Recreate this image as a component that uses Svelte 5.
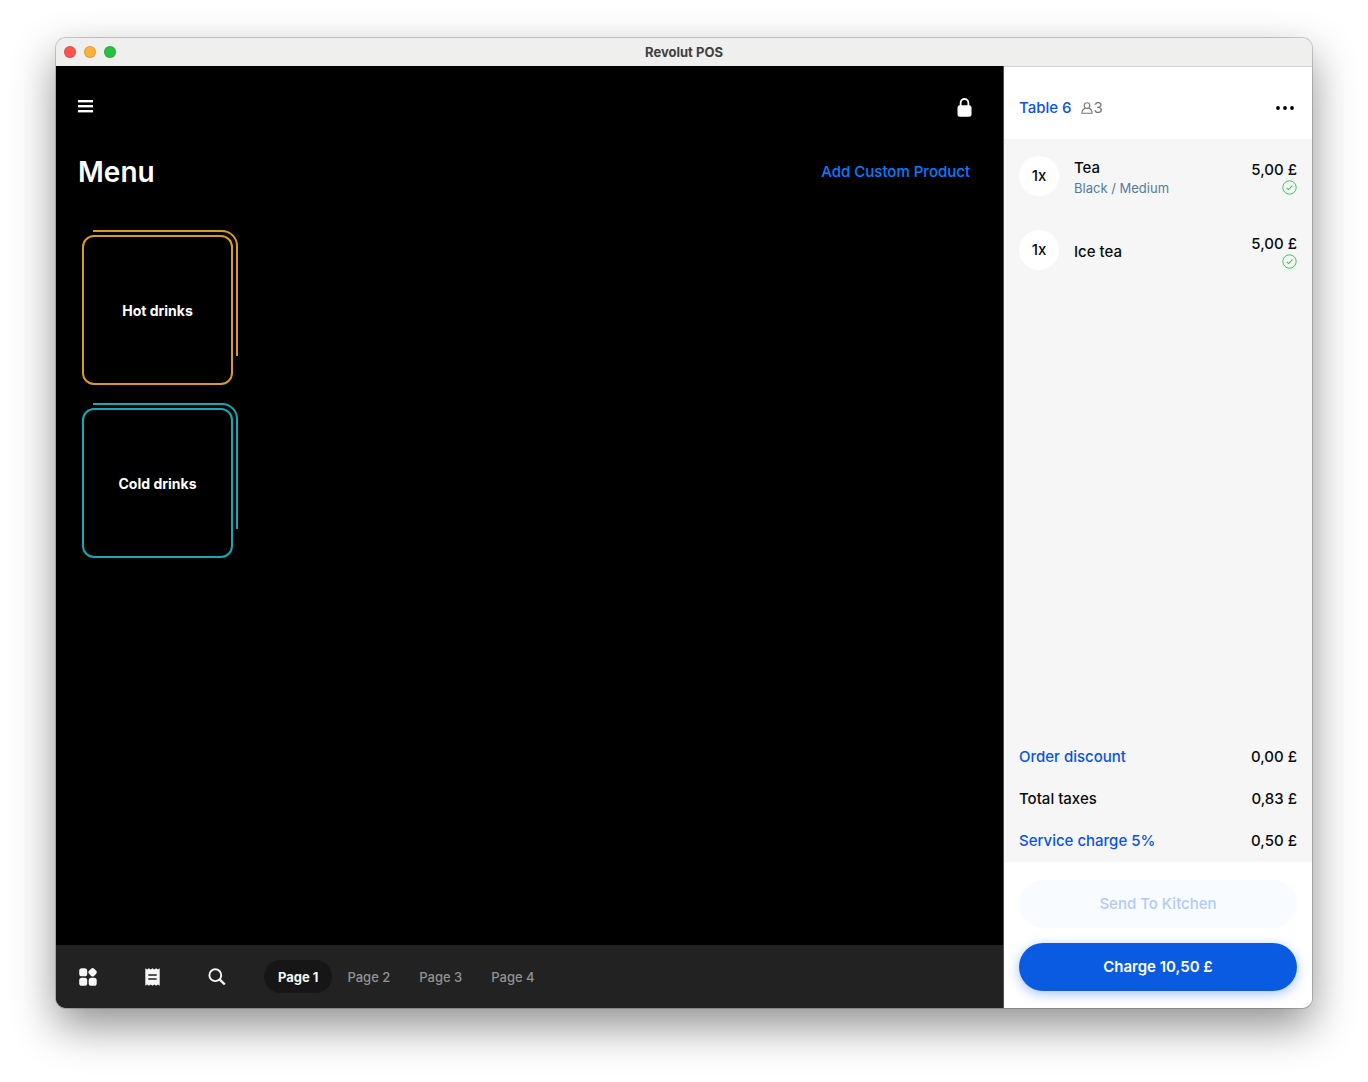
<!--
  App.svelte - point of sale window: product menu on the left, current order on the right
-->
<script lang="ts">
type Category = { name: string; tone: string }
type OrderLine = { qty: number; name: string; options?: string; price: string }

const categories: Category[] = [
  { name: 'Hot drinks', tone: 'amber' },
  { name: 'Cold drinks', tone: 'teal' },
]

const lines: OrderLine[] = [
  { qty: 1, name: 'Tea', options: 'Black / Medium', price: '5,00 £' },
  { qty: 1, name: 'Ice tea', price: '5,00 £' },
]

const pages = ['Page 1', 'Page 2', 'Page 3', 'Page 4']
let activePage = $state('Page 1')
</script>

<div class="desktop">
  <div class="window">
    <header class="titlebar">
      <div class="lights">
        <span class="light red"></span>
        <span class="light yellow"></span>
        <span class="light green"></span>
      </div>
      <div class="window-title">Revolut POS</div>
    </header>

    <div class="body">
      <main class="menu">
        <div class="toolbar">
          <button class="icon-button" aria-label="Open navigation">
            <svg width="15" height="14" viewBox="0 0 15 14" fill="#fff">
              <rect width="15" height="2.4" />
              <rect y="5" width="15" height="2.4" />
              <rect y="10" width="15" height="2.4" />
            </svg>
          </button>
          <button class="icon-button" aria-label="Lock">
            <svg width="15" height="19" viewBox="0 0 15 19">
              <rect x="0.5" y="7.3" width="14" height="11.5" rx="2.5" fill="#fff" />
              <path d="M3.6 9V4.9a3.9 3.9 0 0 1 7.8 0V9" fill="none" stroke="#fff" stroke-width="1.8" />
            </svg>
          </button>
        </div>

        <div class="heading">
          <h1>Menu</h1>
          <button class="add-product">Add Custom Product</button>
        </div>

        <div class="tiles">
          {#each categories as category}
            <button class="tile {category.tone}">{category.name}</button>
          {/each}
        </div>

        <nav class="bottom-bar">
          <div class="tools">
            <button class="icon-button" aria-label="Products">
              <svg width="18" height="18" viewBox="0 0 18 18" fill="#f7f7f7">
                <rect x="0.2" y="0.3" width="8" height="8" rx="2.6" />
                <rect x="10" y="0.7" width="7.2" height="7.2" rx="2.4" transform="rotate(45 13.6 4.3)" />
                <rect x="0.2" y="9.8" width="8" height="8" rx="2.6" />
                <rect x="9.7" y="9.8" width="8" height="8" rx="2.6" />
              </svg>
            </button>
            <button class="icon-button" aria-label="Orders">
              <svg width="15" height="18" viewBox="0 0 15 18">
                <path
                  d="M0.3 0.3l1.8 1.2L3.9 0.3l1.8 1.2L7.5 0.3l1.8 1.2 1.8-1.2 1.8 1.2 1.8-1.2v17.4l-1.8-1.2-1.8 1.2-1.8-1.2-1.8 1.2-1.8-1.2-1.8 1.2-1.8-1.2-1.8 1.2z"
                  fill="#f7f7f7"
                />
                <path d="M3.3 7h8.4M3.3 11h8.4" stroke="#222" stroke-width="1.4" />
              </svg>
            </button>
            <button class="icon-button" aria-label="Search">
              <svg width="18" height="18" viewBox="0 0 18 18" fill="none" stroke="#f7f7f7">
                <circle cx="7.3" cy="7.2" r="5.9" stroke-width="1.9" />
                <path d="M11.6 11.4l5.2 5.1" stroke-width="2.4" />
              </svg>
            </button>
          </div>
          <div class="pages">
            {#each pages as page}
              <button class="page" class:active={page === activePage} onclick={() => (activePage = page)}>
                {page}
              </button>
            {/each}
          </div>
        </nav>
      </main>

      <aside class="order">
        <div class="order-header">
          <button class="table-name">Table 6</button>
          <span class="guests">
            <svg width="12" height="12" viewBox="0 0 12 12" fill="none" stroke="#75787b" stroke-width="1.1">
              <circle cx="6" cy="3.6" r="2.8" />
              <path d="M4.1 6.2C2.2 6.9 0.9 8.6 0.9 11.2h10.2C11.1 8.6 9.8 6.9 7.9 6.2" />
            </svg>
            3
          </span>
          <button class="icon-button more" aria-label="More options">
            <svg width="18" height="4" viewBox="0 0 18 4" fill="#000">
              <circle cx="2" cy="2" r="1.9" />
              <circle cx="9" cy="2" r="1.9" />
              <circle cx="16" cy="2" r="1.9" />
            </svg>
          </button>
        </div>

        <div class="order-body">
          <ul class="lines">
            {#each lines as line}
              <li class="line">
                <span class="qty">{line.qty}x</span>
                <div class="product">
                  <div>{line.name}</div>
                  {#if line.options}
                    <div class="options">{line.options}</div>
                  {/if}
                </div>
                <div class="price">
                  {line.price}
                  <svg width="15" height="15" viewBox="0 0 15 15" fill="none" stroke="#3dc456">
                    <circle cx="7.5" cy="7.5" r="6.7" stroke-width="1" />
                    <path d="M4.6 7.8l1.9 1.8 3.9-4" stroke-width="1.1" />
                  </svg>
                </div>
              </li>
            {/each}
          </ul>

          <div class="totals">
            <div class="total">
              <button class="total-link">Order discount</button>
              <span>0,00 £</span>
            </div>
            <div class="total">
              <span>Total taxes</span>
              <span>0,83 £</span>
            </div>
            <div class="total">
              <button class="total-link">Service charge 5%</button>
              <span>0,50 £</span>
            </div>
          </div>
        </div>

        <div class="actions">
          <button class="action send" disabled>Send To Kitchen</button>
          <button class="action charge">Charge 10,50 £</button>
        </div>
      </aside>
    </div>
  </div>
</div>

<style>
  :global(body) {
    background: #fff;
  }

  .desktop {
    box-sizing: border-box;
    display: flex;
    min-height: 100vh;
    padding: 38px 56px 74px;
    overflow: hidden;
    font-family: Inter, 'Liberation Sans', sans-serif;
    font-size: 15px;
    font-weight: 500;
    line-height: 20px;
    color: #0b0b0c;
  }

  .window {
    flex: 1;
    display: flex;
    flex-direction: column;
    border-radius: 10px;
    overflow: hidden;
    box-shadow:
      0 0 0 1px rgba(0, 0, 0, 0.18),
      0 18px 44px rgba(0, 0, 0, 0.44);
  }

  button {
    margin: 0;
    padding: 0;
    border: 0;
    background: none;
    color: inherit;
    font: inherit;
    cursor: pointer;
  }

  svg {
    display: block;
  }

  /* title bar */
  .titlebar {
    display: grid;
    grid-template-columns: 1fr auto 1fr;
    align-items: center;
    height: 28px;
    padding: 0 8px;
    background: #efefed;
  }

  .lights {
    display: flex;
    gap: 8px;
  }

  .light {
    box-sizing: border-box;
    width: 12px;
    height: 12px;
    border: 1px solid rgba(0, 0, 0, 0.12);
    border-radius: 50%;
  }

  .red {
    background: #ff5450;
  }

  .yellow {
    background: #fdb13a;
  }

  .green {
    background: #27c13f;
  }

  .window-title {
    font-size: 13px;
    font-weight: 700;
    color: #404040;
  }

  .body {
    flex: 1;
    display: flex;
  }

  /* menu side */
  .menu {
    flex: 1;
    display: flex;
    flex-direction: column;
    background: #000;
    color: #fff;
  }

  .toolbar {
    display: flex;
    align-items: center;
    justify-content: space-between;
    height: 82px;
    padding: 0 31px 0 22px;
  }

  .heading {
    display: flex;
    align-items: center;
    justify-content: space-between;
    height: 48px;
    padding: 0 33px 0 22px;
  }

  h1 {
    margin: 0;
    font-size: 28px;
    font-weight: 600;
    line-height: 36px;
  }

  .add-product {
    color: #0a7cff;
  }

  .tiles {
    flex: 1;
    display: flex;
    flex-direction: column;
    gap: 23px;
    padding: 39px 26px;
  }

  .tile {
    position: relative;
    box-sizing: border-box;
    width: 151px;
    height: 150px;
    padding-top: 2px;
    border: 2px solid;
    border-radius: 12px;
    font-size: 14px;
    font-weight: 700;
    color: #fff;
  }

  .tile::after {
    content: '';
    position: absolute;
    top: -7px;
    right: -7px;
    left: 9px;
    height: 124px;
    border: solid;
    border-width: 2px 2px 0 0;
    border-color: inherit;
    border-radius: 0 16px 0 0;
  }

  .amber {
    border-color: #d69d21;
  }

  .teal {
    border-color: #16a8b4;
  }

  .bottom-bar {
    display: flex;
    align-items: center;
    gap: 38px;
    height: 63px;
    padding: 0 23px;
    background: #222;
  }

  .tools {
    display: flex;
    gap: 48px;
  }

  .pages {
    display: flex;
    gap: 1px;
  }

  .page {
    height: 33px;
    padding: 0 14px;
    border-radius: 17px;
    font-size: 13px;
    color: #929292;
  }

  .page.active {
    background: #161616;
    font-weight: 700;
    color: #f7f7f7;
  }

  /* order side */
  .order {
    display: flex;
    flex-direction: column;
    box-sizing: border-box;
    width: 309px;
    border-left: 1px solid #55524e;
    background: #fff;
  }

  .order-header {
    display: flex;
    align-items: center;
    height: 73px;
    padding: 9px 18px 0 15px;
    border-top: 1px solid #d2d2d0;
    box-sizing: border-box;
  }

  .table-name,
  .total-link {
    color: #0b52e1;
  }

  .guests {
    display: flex;
    align-items: center;
    gap: 1px;
    margin-left: 9px;
    font-weight: 400;
    color: #75787b;
  }

  .more {
    margin-left: auto;
  }

  .order-body {
    flex: 1;
    display: flex;
    flex-direction: column;
    justify-content: space-between;
    background: #f6f6f6;
  }

  .lines {
    margin: 0;
    padding: 0;
    list-style: none;
  }

  .line {
    display: flex;
    align-items: center;
    gap: 15px;
    height: 74px;
    padding: 0 15px;
  }

  .qty {
    width: 40px;
    border-radius: 50%;
    background: #fff;
    line-height: 40px;
    text-align: center;
  }

  .product {
    flex: 1;
    padding-top: 3px;
  }

  .options {
    font-size: 13px;
    font-weight: 400;
    color: #557a9e;
  }

  .price {
    display: flex;
    flex-direction: column;
    align-items: flex-end;
    padding-top: 2px;
  }

  .totals {
    padding: 0 15px;
  }

  .total {
    display: flex;
    align-items: center;
    justify-content: space-between;
    height: 42px;
  }

  .actions {
    display: flex;
    flex-direction: column;
    gap: 15px;
    padding: 18px 15px 17px;
  }

  .action {
    height: 48px;
    border-radius: 24px;
    font-weight: 600;
  }

  .send {
    background: #f8fbff;
    font-weight: 500;
    color: #b0cbf7;
    cursor: default;
  }

  .charge {
    background: #0b5be2;
    box-shadow: 0 3px 12px rgba(11, 91, 226, 0.36);
    color: #fff;
  }
</style>
